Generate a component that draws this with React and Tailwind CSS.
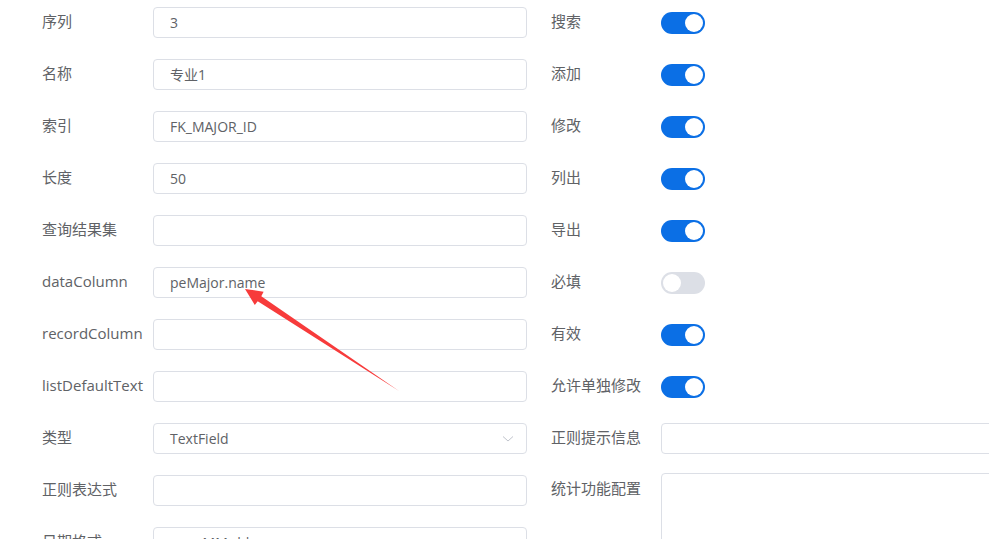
import { useState } from "react";

const leftRows = [
    { label: "序列", value: "3" },
    { label: "名称", value: "专业1" },
    { label: "索引", value: "FK_MAJOR_ID" },
    { label: "长度", value: "50" },
    { label: "查询结果集", value: "" },
    { label: "dataColumn", value: "peMajor.name" },
    { label: "recordColumn", value: "" },
    { label: "listDefaultText", value: "" },
    { label: "类型", value: "TextField", select: true },
    { label: "正则表达式", value: "" },
    { label: "日期格式", value: "yyyy-MM-dd", select: true },
];

const switchRows = [
    { label: "搜索", on: true },
    { label: "添加", on: true },
    { label: "修改", on: true },
    { label: "列出", on: true },
    { label: "导出", on: true },
    { label: "必填", on: false },
    { label: "有效", on: true },
    { label: "允许单独修改", on: true },
];

function Toggle(props) {
    const [on, setOn] = useState(props.on);
    return (
        <button
            className={"w-[44px] h-[22px] rounded-full p-[2px] flex items-center " + (on ? "bg-[#0b6fe5] justify-end" : "bg-[#dcdfe6] justify-start")}
            onClick={() => setOn(!on)}
        >
            <span className="block w-[18px] h-[18px] rounded-full bg-white" />
        </button>
    );
}

function Field(props) {
    return (
        <div className="w-[374px] h-[31px] border border-[#dcdfe6] rounded-[4px] bg-white flex items-center justify-between pl-[16px] pr-[15px]">
            <span className="text-[14px] text-[#606266] whitespace-nowrap">{props.value}</span>
            {props.select && (
                <svg width="12" height="8" viewBox="0 0 12 8" className="-mr-[3px]">
                    <path d="M1 1.5 L6 6 L11 1.5" fill="none" stroke="#c0c4cc" strokeWidth="1" />
                </svg>
            )}
        </div>
    );
}

export default function App() {
    return (
        <div className="relative w-[989px] h-[539px] overflow-hidden bg-white font-['Open_Sans','Noto_Sans_CJK_SC',sans-serif]">
            <div className="flex gap-6 pl-[42px] pt-[7px]">
                <div className="flex flex-col">
                    {leftRows.map((row) => (
                        <div key={row.label} className="flex h-[52px]">
                            <label className="w-[111px] leading-[29px] text-[15px] text-[#606266] whitespace-nowrap">{row.label}</label>
                            <Field value={row.value} select={row.select} />
                        </div>
                    ))}
                </div>
                <div className="flex flex-col">
                    {switchRows.map((row) => (
                        <div key={row.label} className="flex h-[52px]">
                            <label className="w-[110px] leading-[29px] text-[15px] text-[#606266] whitespace-nowrap">{row.label}</label>
                            <div className="h-[31px] flex items-center">
                                <Toggle on={row.on} />
                            </div>
                        </div>
                    ))}
                    <div className="flex h-[50px]">
                        <label className="w-[110px] leading-[29px] text-[15px] text-[#606266] whitespace-nowrap">正则提示信息</label>
                        <Field value="" />
                    </div>
                    <div className="flex">
                        <label className="w-[110px] leading-[31px] text-[15px] text-[#606266] whitespace-nowrap">统计功能配置</label>
                        <textarea className="block w-[374px] h-[110px] border border-[#dcdfe6] rounded-[4px] resize-none outline-none" />
                    </div>
                </div>
            </div>

            {/* annotation arrow drawn over the form */}
            <svg className="absolute left-0 top-0 pointer-events-none" width="989" height="539">
                <polygon
                    points="245,289 263.6,291.7 261.3,296.2 399,391 257.7,301.2 254.8,305.1"
                    fill="#f73b3b"
                />
            </svg>
        </div>
    );
}
